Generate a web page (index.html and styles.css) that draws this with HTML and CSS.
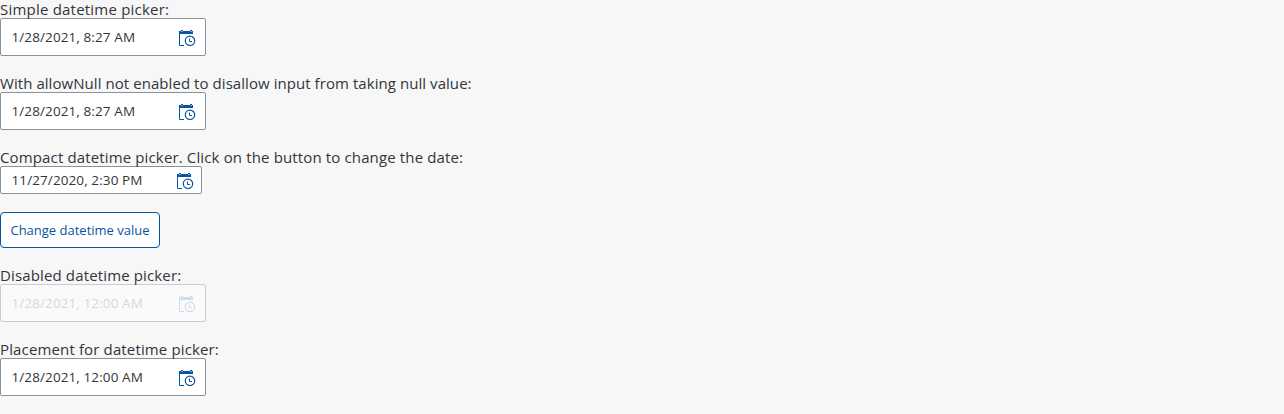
FILE: index.html
```html
<!DOCTYPE html>
<html lang="en">
<head>
<meta charset="utf-8">
<title>Datetime picker</title>
<link rel="stylesheet" href="styles.css">
</head>
<body>
<svg class="sprite" aria-hidden="true">
  <symbol id="date-time" viewBox="0 0 17 16">
    <path fill="currentColor" d="M0 1h2V0h2v1h7V0h2v1h1v3H0z"/>
    <path fill="#fff" d="M2.500 1h1v1h-1zM11.500 1h1v1h-1z"/>
    <path fill="none" stroke="currentColor" d="M.5 4v11.500H5"/>
    <circle cx="11" cy="10.800" r="4.700" fill="none" stroke="currentColor" stroke-width="1.200"/>
    <path fill="none" stroke="currentColor" d="M10.500 8.500v3H13"/>
  </symbol>
</svg>
<main class="page">
  <section class="example">
    <div class="label simple">Simple datetime picker:</div>
    <div class="picker"><span class="value">1/28/2021, 8:27 AM</span><svg class="icon"><use href="#date-time"/></svg></div>
  </section>
  <section class="example">
    <div class="label required">With allowNull not enabled to disallow input from taking null value:</div>
    <div class="picker"><span class="value">1/28/2021, 8:27 AM</span><svg class="icon"><use href="#date-time"/></svg></div>
  </section>
  <section class="example">
    <div class="label">Compact datetime picker. Click on the button to change the date:</div>
    <div class="picker compact"><span class="value">11/27/2020, 2:30 PM</span><svg class="icon"><use href="#date-time"/></svg></div>
  </section>
  <button class="button" type="button">Change datetime value</button>
  <section class="example">
    <div class="label">Disabled datetime picker:</div>
    <div class="picker disabled"><span class="value">1/28/2021, 12:00 AM</span><svg class="icon"><use href="#date-time"/></svg></div>
  </section>
  <section class="example">
    <div class="label">Placement for datetime picker:</div>
    <div class="picker"><span class="value">1/28/2021, 12:00 AM</span><svg class="icon"><use href="#date-time"/></svg></div>
  </section>
</main>
</body>
</html>
```
FILE: styles.css
```css
* { box-sizing: border-box; }
body {
  margin: 0;
  background: #f7f7f7;
  color: #32363a;
  font-family: "Open Sans", sans-serif;
}
.sprite { display: none; }
.page {
  display: flex;
  flex-direction: column;
  align-items: flex-start;
  gap: 18px;
  min-height: 414px;
}
.label {
  height: 18px;
  font-size: 15px;
  line-height: 18px;
  letter-spacing: 0.14px;
  white-space: nowrap;
}
.simple { letter-spacing: 0.21px; }
.required { letter-spacing: 0.06px; }
.picker {
  display: flex;
  align-items: center;
  justify-content: space-between;
  width: 206px;
  height: 38px;
  padding: 2px 9px 0 10.500px;
  background: #fff;
  border: 1px solid #89919a;
  border-radius: 2px;
}
.value {
  padding-bottom: 2px;
  font-size: 13.500px;
  line-height: 18px;
  letter-spacing: 0.1px;
  white-space: nowrap;
}
.icon {
  width: 17px;
  height: 16px;
  color: #0854a0;
}
.compact {
  width: 202px;
  height: 28px;
  padding-right: 7px;
}
.disabled {
  border-color: #c8ccd0;
  background: #fafafa;
}
.disabled .value { color: #d7d8d9; }
.disabled .icon { color: #cddcea; }
.button {
  width: 160px;
  height: 36px;
  padding: 0;
  background: #fff;
  border: 1px solid #0854a0;
  border-radius: 4px;
  color: #0854a0;
  font: 13px/18px "Open Sans", sans-serif;
  white-space: nowrap;
}
```
